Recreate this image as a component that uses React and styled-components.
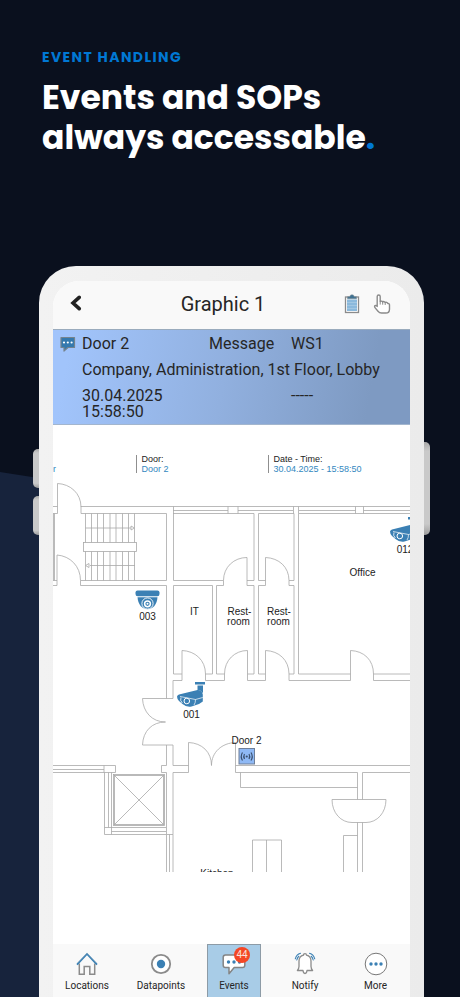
import React from 'react';
import styled, { createGlobalStyle, ThemeProvider } from 'styled-components';

const theme = {
  colors: {
    background: '#0a101e',
    wedge: '#17233c',
    accent: '#0078d4',
    icon: '#3b80b4',
    outline: '#8b8b8b',
    text: '#262626',
    bar: '#f9f9f9',
  },
};

const GlobalStyle = createGlobalStyle`
  *, *::before, *::after {
    box-sizing: border-box;
  }

  body {
    margin: 0;
    background: #0a101e;
    font-family: Roboto, 'Liberation Sans', sans-serif;
  }

  button {
    padding: 0;
    border: 0;
    background: none;
    color: inherit;
    font: inherit;
    cursor: pointer;
  }

  svg {
    display: block;
  }
`;

const Page = styled.main`
  position: relative;
  display: flex;
  flex-direction: column;
  min-height: 100vh;
  overflow: hidden;
  background: ${({ theme }) => theme.colors.background};

  &::before {
    content: '';
    position: absolute;
    top: 472px;
    bottom: 0;
    left: 0;
    width: 50%;
    background: ${({ theme }) => theme.colors.wedge};
    clip-path: polygon(0 0, 100% 36px, 100% 100%, 0 100%);
  }
`;

const Intro = styled.header`
  padding: 48px 42px 108px;
  font-family: Poppins, Inter, sans-serif;
  font-weight: 700;
`;

const Eyebrow = styled.p`
  margin: 0 0 12px;
  color: ${({ theme }) => theme.colors.accent};
  font-size: 14px;
  line-height: 18px;
  letter-spacing: 0.1em;
  text-transform: uppercase;
`;

const Headline = styled.h1`
  margin: 0;
  color: #fff;
  font-size: 33px;
  font-weight: 700;
  line-height: 40px;
`;

const Dot = styled.span`
  color: ${({ theme }) => theme.colors.accent};
`;

const Phone = styled.section`
  position: relative;
  display: flex;
  flex: 1;
  margin: 0 36px 0 39px;
  padding: 15px 14px 0;
  border-radius: 37px 37px 0 0;
  background: linear-gradient(90deg, #f2f2f2, #ebebeb);
`;

const SideKey = styled.span`
  position: absolute;
  top: ${({ $top }) => $top}px;
  ${({ $side }) => $side}: -6px;
  width: 6px;
  height: ${({ $height }) => $height}px;
  border-radius: ${({ $side }) => ($side === 'left' ? '5px 0 0 5px' : '0 5px 5px 0')};
  background: linear-gradient(#a9a9a9, #c9c9c9 10%, #c9c9c9 88%, #9d9d9d);
`;

const Screen = styled.div`
  display: flex;
  flex: 1;
  flex-direction: column;
  min-width: 0;
  overflow: hidden;
  border-radius: 26px 26px 0 0;
  background: #fff;
  color: ${({ theme }) => theme.colors.text};
`;

const TitleBar = styled.div`
  display: flex;
  align-items: center;
  height: 48px;
  padding: 0 18px 3px 16px;
  background: ${({ theme }) => theme.colors.bar};
`;

const Title = styled.h2`
  flex: 1;
  margin: 0;
  font-size: 20px;
  font-weight: 400;
  line-height: 24px;
  text-align: center;
`;

const BackButton = styled.button`
  width: 35px;
`;

const Actions = styled.div`
  display: flex;
  gap: 10px;
`;

const EventCard = styled.article`
  display: grid;
  grid-template-columns: 22px 127px 82px 1fr;
  grid-template-rows: 26px 26px 32px;
  height: 96px;
  padding: 5px 8px 0 7px;
  border-top: 1px solid #9aabbd;
  border-bottom: 1px solid #a3b6ce;
  background: linear-gradient(100deg, #a1c4fb 5%, #91b0df 48%, #7e9ac2 88%);
  font-size: 16px;
  line-height: 18px;
`;

const Cell = styled.span`
  grid-column: ${({ $column }) => $column};
`;

const Stamp = styled.time`
  grid-column: 2;
  line-height: 16px;
  padding-top: 1px;
`;

const PlanArea = styled.div`
  flex: 1;
`;

const Plan = styled.svg`
  width: 100%;
  height: auto;
  font-family: 'Liberation Sans', Arial, sans-serif;
  font-size: 10px;
  fill: #222;
`;

const TabBar = styled.nav`
  display: grid;
  grid-template-columns: 56fr 68fr 54fr 64fr 53fr;
  gap: 12px;
  height: 53px;
  padding: 0 8px 0 6px;
  background: ${({ theme }) => theme.colors.bar};
`;

const Tab = styled.button`
  display: flex;
  flex-direction: column;
  align-items: center;
  gap: 4px;
  padding-top: ${({ $active }) => ($active ? 7 : 8)}px;
  border: ${({ $active }) => ($active ? '1px solid #8d9ba6' : '0')};
  border-bottom: 0;
  background: ${({ $active }) => ($active ? '#a8cce7' : 'transparent')};
  font-size: 10px;
  line-height: 12px;
`;

const IconSlot = styled.span`
  position: relative;
`;

const Badge = styled.span`
  position: absolute;
  top: -5px;
  right: -4px;
  width: 16px;
  height: 16px;
  border-radius: 50%;
  background: #f44725;
  color: #fbe3dc;
  font-size: 10px;
  line-height: 16px;
  text-align: center;
`;

const blue = theme.colors.icon;
const gray = theme.colors.outline;

const BackIcon = () => (
  <svg width="14" height="18" viewBox="0 0 14 18" fill="none">
    <path d="M10.200 2.300L4 8l6.200 5.700" stroke="#222" strokeWidth="3.600" strokeLinecap="round" />
  </svg>
);

const ClipboardIcon = () => (
  <svg width="20" height="20" viewBox="0 0 20 20">
    <rect x="3.500" y="3" width="13" height="15.500" fill="#fff" stroke={gray} strokeWidth="1.300" />
    <rect x="5" y="5.500" width="10" height="11.500" fill="#8bb9dc" />
    <path d="M5 8.500h10M5 11.500h10M5 14.500h10" stroke="#a8cae3" strokeWidth="0.800" />
    <path d="M5.500 4.700V2.800h2.300q.2-2.100 2.200-2.100t2.200 2.100h2.300v1.900z" fill="#3f7191" stroke="#7c8e99" strokeWidth="0.600" />
  </svg>
);

const HandIcon = () => (
  <svg width="20" height="20" viewBox="0 0 20 20" fill="#fff" stroke={gray} strokeWidth="1.400" strokeLinecap="round" strokeLinejoin="round">
    <path d="M5.200 12.400V2.600c0-2.100 3-2.100 3 0v5c.8-.8 2-.6 2.500.3.900-.7 2-.4 2.400.6 1-.6 2.200 0 2.700 1 .9-.3 1.700.4 1.700 1.500v4.200c0 2.400-1.500 3.800-3.700 3.800H9.500c-1.500 0-2.600-.7-3.500-1.800l-3-3.600c-1.300-1.600.7-3.100 2.200-1.200z" />
    <path d="M8.200 8v2.200M10.700 8.300v2M13.200 8.900v1.700" strokeWidth="1" />
  </svg>
);

const MessageIcon = () => (
  <svg width="16" height="18" viewBox="0 0 16 18">
    <path d="M1 2.500h13.500v10H8L4 16v-3.500H1z" fill="#3479ae" stroke="#75838d" strokeWidth="1.200" strokeLinejoin="round" />
    <circle cx="4" cy="7.500" r="1.100" fill="#fff" />
    <circle cx="7.800" cy="7.500" r="1.100" fill="#fff" />
    <circle cx="11.600" cy="7.500" r="1.100" fill="#fff" />
  </svg>
);

const HomeIcon = () => (
  <svg width="24" height="24" viewBox="0 0 24 24" fill="none" strokeWidth="1.500">
    <path d="M4.300 11.500v10.800h4.900v-7.800h5.600v7.800h4.900V11.500" stroke={gray} />
    <path d="M2 12.600L12 2l10 10.600" stroke={blue} strokeWidth="1.800" />
    <path d="M2.500 11L12 1.200 21.500 11" stroke="#8aa7bd" strokeWidth="0.600" />
  </svg>
);

const DatapointIcon = () => (
  <svg width="24" height="24" viewBox="0 0 24 24">
    <circle cx="12" cy="12" r="9.200" fill="#fff" stroke={gray} strokeWidth="1.800" />
    <circle cx="12" cy="12" r="4.200" fill={blue} />
  </svg>
);

const ChatIcon = () => (
  <svg width="24" height="24" viewBox="0 0 24 24">
    <path d="M3.500 3h17q2.300 0 2.300 2.300v8q0 2.300-2.300 2.300h-8.300L7 21.700v-6.100H3.500q-2.300 0-2.300-2.300v-8Q1.200 3 3.500 3z" fill="#fff" stroke="#848484" strokeWidth="1.500" strokeLinejoin="round" />
    <circle cx="6.500" cy="10" r="1.700" fill={blue} />
    <circle cx="12" cy="10" r="1.700" fill={blue} />
    <circle cx="17.500" cy="10" r="1.700" fill={blue} />
  </svg>
);

const BellIcon = () => (
  <svg width="24" height="24" viewBox="0 0 24 24" fill="none" strokeLinecap="round" strokeLinejoin="round">
    <path d="M10.500 3.200q0-1.600 1.500-1.600t1.500 1.600c3 .7 4.500 3 4.500 6v5.300c0 2 .5 2.700 1.600 4H14q-.3 3-2 3t-2-3H4.400c1.100-1.300 1.600-2 1.600-4V9.200c0-3 1.500-5.300 4.500-6z" fill="#fff" stroke={gray} strokeWidth="1.300" />
    <path d="M5.800 4.300Q4.300 5.500 3.800 8M18.200 4.300q1.500 1.200 2 3.700M7.500 1.300Q3.500 2.500 2.300 6.800M16.500 1.300q4 1.200 5.200 5.500" stroke={blue} strokeWidth="1.100" />
  </svg>
);

const MoreIcon = () => (
  <svg width="24" height="24" viewBox="0 0 24 24">
    <circle cx="12" cy="12" r="10.800" fill="#fff" stroke="#777" strokeWidth="1" />
    <circle cx="7" cy="12" r="1.700" fill={blue} />
    <circle cx="12" cy="12" r="1.700" fill={blue} />
    <circle cx="17" cy="12" r="1.700" fill={blue} />
  </svg>
);

const DomeCamera = ({ x, y }) => (
  <g transform={`translate(${x} ${y})`}>
    <path d="M2 0h20q2 0 2 2v1.500q0 2.200-2.200 2.200H2.200Q0 5.700 0 3.500V2q0-2 2-2z" fill={blue} />
    <path d="M2 6.700h20c-.4 7-4.500 12-10 12s-9.600-5-10-12z" fill={blue} />
    <circle cx="12" cy="13" r="5.600" fill="none" stroke="#fff" strokeWidth="0.900" />
    <circle cx="12" cy="13.300" r="2.900" fill={blue} stroke="#fff" strokeWidth="1.500" />
    <circle cx="12" cy="13.300" r="1" fill="#fff" />
  </g>
);

const BulletCamera = ({ x, y }) => (
  <g transform={`translate(${x} ${y})`}>
    <path d="M18 0h10v2.500H18zM20.500 3.500H26V11l-3-2.500h-2.500z" fill={blue} />
    <path d="M0 14.500Q.5 13 2 12.500L20.500 8q4.500 0 5.300 4.500v7L22 22l-7.500 2.500q-5 1-9-2.500L2 19q-2-2-2-4.500z" fill={blue} />
    <path d="M3 14.500l15.500 3 7.300-2M18.500 17.500q0 3.500-1.500 5.500" fill="none" stroke="#fff" strokeWidth="0.700" />
    <circle cx="9.800" cy="19" r="2.800" fill={blue} stroke="#fff" strokeWidth="1" />
    <path d="M4 15.500q-1.300 3 1.300 5.500" fill="none" stroke="#fff" strokeWidth="0.800" />
  </g>
);

// Straight wall segments, windows and door leaves of the first floor
const walls = `
  M53 506.500H57.500M53 513.500H57.500V483.500M81 506.500H410M81 506.500V513.500H166.500V580.500
  M173 513.500H254V580.500H247M258.500 580.500V513.500H294V580.500H289V585.500H294V674H289V680.500H350.500V650.500
  M173 510.500H228M238 510.500H293M299 510.500H355.500M363.500 510.500H410
  M228 506.500V513.500M238 506.500V513.500M293.500 506.500V513.500M355.500 506.500V513.500M363.500 506.500V513.500M410 513.500H298.500V674H350.500
  M298.500 506.500V513.500M173.500 506.500V580.500H223.500V585.500H216.500V674H224.500V680.500H205.500V674H212.500V585.500H173.500V674H182
  M53.500 513.500V580.500M54.500 513.500V580.500M53 580.500H57M53 585.500H57V555
  M166.500 580.500H80.500V585.500H166.500V698.500M142.500 698.500H173V680.500H182V650.500
  M247 557.500V585.500H254V674H247.500M258.500 580.500H265.500M265.500 557.500V585.500H258.500V674H265.500
  M247.500 650.500V680.500H265.500V650.500M410 674H373.500V680.500H410
  M142.500 745H173V765.500H188.500M188.500 742.500V772.500H173V834.500H166.500V772.500H161.500V765.500H166.500V745
  M53 765.500H115.500V772.500H53M53 769.500H104M104 765.500V772.500M104.500 772.500V834.500H166.500M108.500 772.500V827.500M111.500 772.500V834.500
  M104.500 827.500H166M111.500 831.500H166M166.500 834.500V872M169.500 834.500V872M173 834.500V872
  M235.500 742.500V772.500H357.500V799.500M410 765.500H235.500M240.500 772.500V787.500H357.500
  M410 772.500H362.500V799.500M357.500 822.500V872M362.500 822.500V872M343.500 872V835.500H357.500
  M252.500 872V840H281.500V872M266.500 840V872
`;

const doorArcs = `
  M57.500 483.500C70 484 81 493 81 507M57 555C70 556 80.500 566 80.500 580.500
  M223.500 580.500C223.500 567 234 557.500 247 557.500M265.500 557.500C279 558 289 567 289 580.500
  M182 650.500C195 651 205.500 660 205.500 674M224.500 674C224.500 660 235 650.500 247.500 650.500
  M265.500 650.500C279 651 289 660 289 674M350.500 650.500C364 651 373.500 660 373.500 674
  M142.500 698.500C143 712 152 722 165.500 722C152 722 143 731 142.500 745
  M188.500 742.500C202 743 211.500 752 211.500 765.500C211.500 752 222 743 235.500 742.500
  M332 799.500H386C386 813 377 822.500 366 822.500H352C341 822.500 332 813 332 799.500Z
`;

const stairSteps = [85.5, 91.5, 97.5, 103.5, 110, 116, 122.5, 128.5, 134.5];

const labels = [
  { x: 147.5, y: 620, text: '003' },
  { x: 191.5, y: 717.5, text: '001' },
  { x: 405, y: 552.5, text: '012' },
  { x: 362.5, y: 575.5, text: 'Office' },
  { x: 194.5, y: 614.5, text: 'IT' },
  { x: 239.5, y: 614.5, text: 'Rest-' },
  { x: 238.5, y: 624.5, text: 'room' },
  { x: 279, y: 614.5, text: 'Rest-' },
  { x: 278.5, y: 624.5, text: 'room' },
  { x: 246.5, y: 743.5, text: 'Door 2' },
  { x: 217, y: 876.5, text: 'Kitchen' },
];

const FloorPlan = () => (
  <Plan viewBox="53 425 357 447" role="img" aria-label="Floor plan, 1st Floor">
    <g fontSize="9">
      <path d="M136.500 455V473M268.500 455V473" stroke="#8f8f8f" />
      <text x="141.500" y="462">Door:</text>
      <text x="273.500" y="462">Date - Time:</text>
      <g fill="#3388c0">
        <text x="56" y="472" textAnchor="end">Floor</text>
        <text x="141.500" y="472">Door 2</text>
        <text x="273.500" y="472">30.04.2025 - 15:58:50</text>
      </g>
    </g>
    <g fill="none" stroke="#a8a8a8" strokeWidth="0.800">
      <path d={walls} />
      <path d={doorArcs} />
      {stairSteps.map((x) => (
        <path key={x} d={`M${x} 513.500V580.500`} />
      ))}
      <path d="M85.500 528H131M90 565.500H135" />
      <path d="M131 526l3.500 2-3.500 2zM89 563.500l-3.500 2 3.500 2z" fill="#fff" />
      <rect x="83.500" y="542.500" width="53" height="9" fill="#fff" />
      <rect x="113.500" y="774.500" width="51" height="51" />
      <rect x="114.500" y="775.500" width="49" height="49" />
      <path d="M114 775L164 825M164 775L114 825" />
    </g>
    <DomeCamera x={135.5} y={590.5} />
    <BulletCamera x={177} y={682} />
    <BulletCamera x={390} y={517} />
    <rect x="239" y="748.500" width="15.500" height="15.500" fill="#8fb9f5" stroke="#6f7f98" strokeWidth="1" />
    <g fill="none" stroke="#3b506e" strokeWidth="1.200">
      <path d="M244.500 754q-1.500 2.500 0 5M242.500 752.500q-2.500 4 0 8M249 754q1.500 2.500 0 5M251 752.500q2.500 4 0 8" />
      <circle cx="246.750" cy="756.500" r="0.500" />
    </g>
    <g textAnchor="middle">
      {labels.map(({ x, y, text }) => (
        <text key={`${x}-${y}`} x={x} y={y}>{text}</text>
      ))}
    </g>
  </Plan>
);

const tabs = [
  { label: 'Locations', Icon: HomeIcon },
  { label: 'Datapoints', Icon: DatapointIcon },
  { label: 'Events', Icon: ChatIcon, badge: 44, active: true },
  { label: 'Notify', Icon: BellIcon },
  { label: 'More', Icon: MoreIcon },
];

const App = () => (
  <ThemeProvider theme={theme}>
    <GlobalStyle />
    <Page>
      <Intro>
        <Eyebrow>Event handling</Eyebrow>
        <Headline>
          Events and SOPs
          <br />
          always accessable<Dot>.</Dot>
        </Headline>
      </Intro>
      <Phone>
        <SideKey $side="left" $top={183} $height={39} />
        <SideKey $side="left" $top={230} $height={39} />
        <SideKey $side="right" $top={176} $height={93} />
        <Screen>
          <TitleBar>
            <BackButton aria-label="Back">
              <BackIcon />
            </BackButton>
            <Title>Graphic 1</Title>
            <Actions>
              <button aria-label="Procedure">
                <ClipboardIcon />
              </button>
              <button aria-label="Operate">
                <HandIcon />
              </button>
            </Actions>
          </TitleBar>
          <EventCard>
            <Cell $column="1">
              <MessageIcon />
            </Cell>
            <Cell $column="2">Door 2</Cell>
            <Cell $column="3">Message</Cell>
            <Cell $column="4">WS1</Cell>
            <Cell $column="2 / -1">Company, Administration, 1st Floor, Lobby</Cell>
            <Stamp dateTime="2025-04-30T15:58:50">
              30.04.2025
              <br />
              15:58:50
            </Stamp>
            <Cell $column="4">-----</Cell>
          </EventCard>
          <PlanArea>
            <FloorPlan />
          </PlanArea>
          <TabBar>
            {tabs.map(({ label, Icon, badge, active }) => (
              <Tab key={label} $active={active} aria-current={active ? 'page' : undefined}>
                <IconSlot>
                  <Icon />
                  {badge && <Badge>{badge}</Badge>}
                </IconSlot>
                {label}
              </Tab>
            ))}
          </TabBar>
        </Screen>
      </Phone>
    </Page>
  </ThemeProvider>
);

export default App;
